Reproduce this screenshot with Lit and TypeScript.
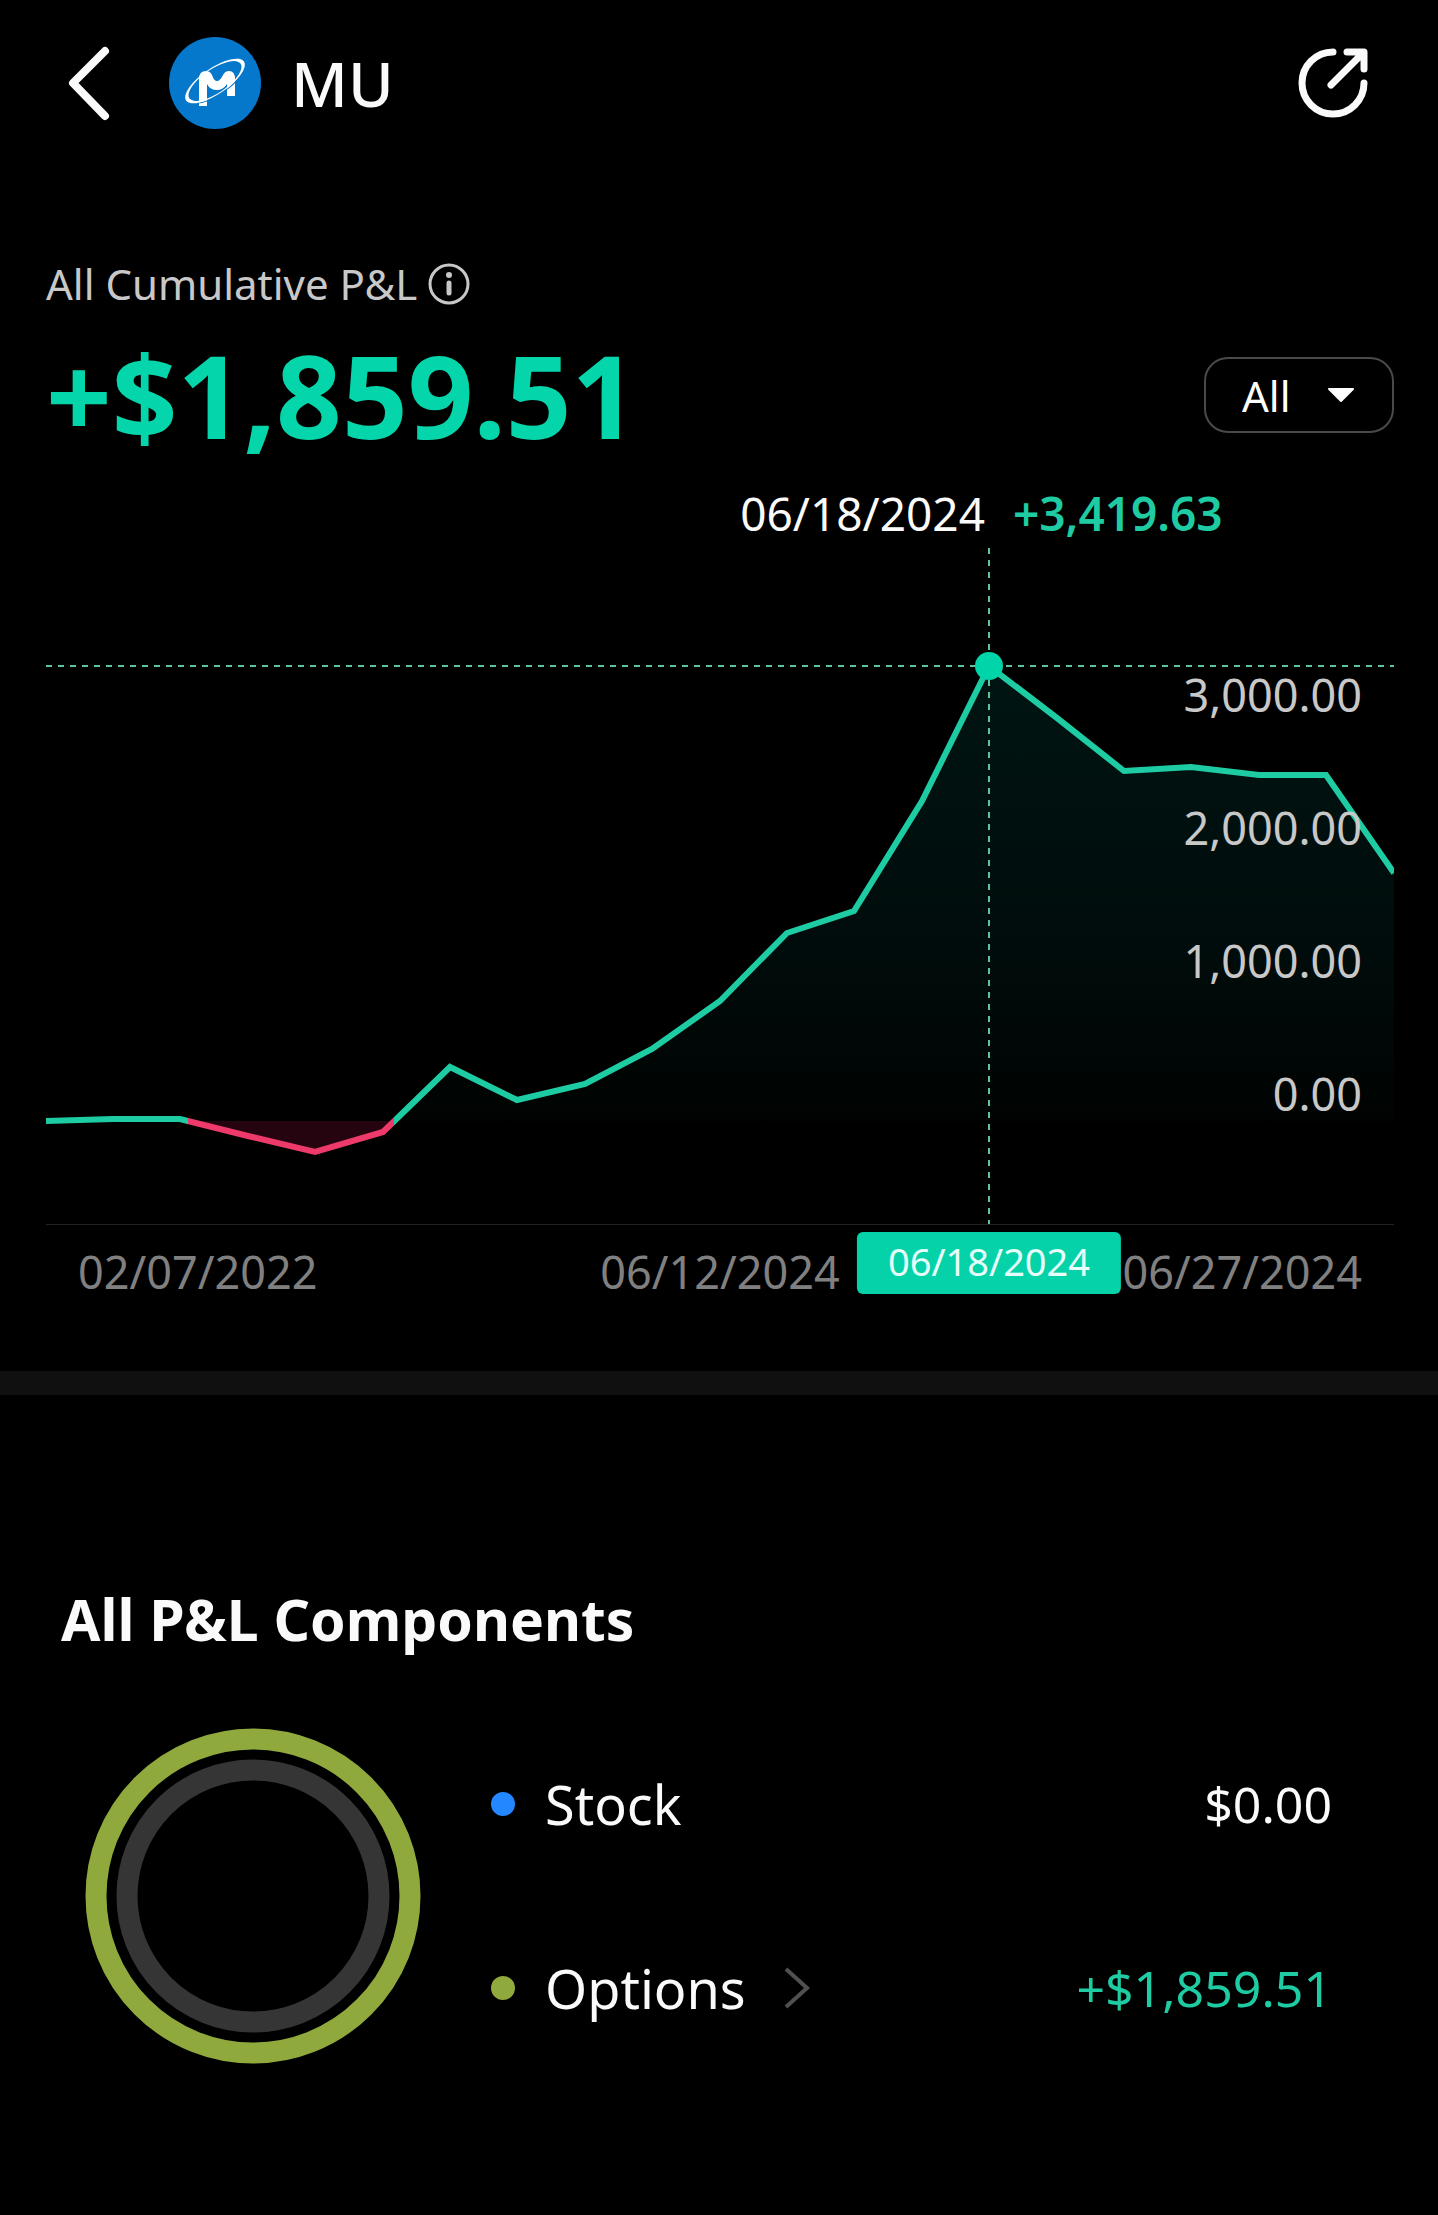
import { LitElement, html, css, svg } from "lit";
import { customElement } from "lit/decorators.js";

const PLOT_W = 1348;
const PLOT_H = 676;
const ZERO_Y = 573;
const PX_PER_DOLLAR = 0.133;
const GAIN = "#1ecca4";
const LOSS = "#ee3a6a";

const SERIES = [
  0, 15, 15, -110, -233, -80, 406, 158, 278, 541, 902, 1414, 1580, 2406, 3419.63,
  3030, 2635, 2662, 2602, 2598, 1865,
];
const SELECTED = 14;

const px = (i: number) => Math.floor((i * PLOT_W) / (SERIES.length - 1));
const py = (v: number) => Math.round(ZERO_Y - v * PX_PER_DOLLAR);

/** Colour stops along x that switch the line colour where the series crosses zero. */
const lineStops = () => {
  const stops: { at: number; color: string }[] = [];
  for (let i = 1; i < SERIES.length; i++) {
    const a = SERIES[i - 1];
    const b = SERIES[i];
    if (a * b >= 0) continue;
    const at = (px(i - 1) + (a / (a - b)) * (px(i) - px(i - 1))) / PLOT_W;
    stops.push({ at, color: a > 0 ? GAIN : LOSS }, { at, color: b > 0 ? GAIN : LOSS });
  }
  return stops;
};

@customElement("pnl-chart")
export class PnlChart extends LitElement {
  static styles = css`
    :host {
      display: block;
      position: relative;
    }
    .readout {
      display: flex;
      gap: 28px;
      padding-left: 51.5%;
      font-size: 46px;
      line-height: 64px;
      white-space: nowrap;
    }
    .readout strong {
      font-weight: 600;
      color: #1ecba2;
    }
    .plot {
      display: grid;
      position: relative;
      margin-top: 3px;
      border-bottom: 1px solid #222;
    }
    .plot > svg,
    .scale {
      grid-area: 1 / 1;
    }
    .plot > svg {
      display: block;
      width: 100%;
      height: 676px;
    }
    .scale {
      list-style: none;
      margin: 0;
      padding: 80px 32px 0 0;
      text-align: right;
      font-size: 45px;
      line-height: 133px;
      color: #c8c8c8;
      z-index: 1;
    }
    .marker {
      position: absolute;
      width: 28px;
      height: 28px;
      border-radius: 50%;
      background: #00d4a9;
      transform: translate(-50%, -50%);
    }
    .dates {
      position: relative;
      display: flex;
      justify-content: space-between;
      padding: 15px 32px 0;
      font-size: 45px;
      line-height: 64px;
      color: #808080;
    }
    .tag {
      position: absolute;
      top: 7px;
      transform: translateX(-50%);
      padding: 0 31px;
      height: 62px;
      border-radius: 6px;
      background: #05d2a8;
      color: #e6fffa;
      font-size: 38px;
      line-height: 58px;
    }
  `;

  render() {
    const pts = SERIES.map((v, i) => `${px(i)},${py(v)}`).join(" ");
    const sx = px(SELECTED);
    const sy = py(SERIES[SELECTED]);
    const left = `left:${(sx / PLOT_W) * 100}%`;
    const plot = svg`
      <defs>
        <linearGradient id="stroke" gradientUnits="userSpaceOnUse" x1="0" y1="0" x2=${PLOT_W} y2="0">
          ${lineStops().map((s) => svg`<stop offset=${s.at} stop-color=${s.color}></stop>`)}
        </linearGradient>
        <linearGradient id="area" gradientUnits="userSpaceOnUse" x1="0" y1="0" x2="0" y2=${PLOT_H}>
          <stop offset=${sy / PLOT_H} stop-color="#001513"></stop>
          <stop offset="0.6" stop-color="#000c0b"></stop>
          <stop offset=${ZERO_Y / PLOT_H} stop-color="#000302"></stop>
          <stop offset=${ZERO_Y / PLOT_H} stop-color="#26040f"></stop>
        </linearGradient>
      </defs>
      <polygon points="0,${ZERO_Y} ${pts} ${PLOT_W},${ZERO_Y}" fill="url(#area)"></polygon>
      <g stroke="#5cc4a4" stroke-width="2" stroke-dasharray="6 6">
        <line x1="0" y1=${sy} x2=${PLOT_W} y2=${sy} vector-effect="non-scaling-stroke"></line>
        <line x1=${sx} y1="0" x2=${sx} y2=${PLOT_H} vector-effect="non-scaling-stroke"></line>
      </g>
      <polyline points=${pts} fill="none" stroke="url(#stroke)" stroke-width="6"
        vector-effect="non-scaling-stroke"></polyline>`;
    return html`
      <div class="readout"><span>06/18/2024</span><strong>+3,419.63</strong></div>
      <div class="plot">
        <svg viewBox="0 0 ${PLOT_W} ${PLOT_H}" preserveAspectRatio="none" aria-hidden="true">${plot}</svg>
        <ul class="scale">
          ${["3,000.00", "2,000.00", "1,000.00", "0.00"].map((t) => html`<li>${t}</li>`)}
        </ul>
        <span class="marker" style="${left};top:${sy}px"></span>
      </div>
      <div class="dates">
        <span>02/07/2022</span><span>06/12/2024</span><span>06/27/2024</span>
        <span class="tag" style=${left}>06/18/2024</span>
      </div>
    `;
  }
}

@customElement("app-root")
export class AppRoot extends LitElement {
  static styles = css`
    :host {
      display: block;
      min-height: 100vh;
      background: #000;
      color: #fafafa;
      font-family: "Noto Sans", "Open Sans", sans-serif;
    }
    button {
      display: flex;
      padding: 0;
      border: 0;
      background: none;
      color: inherit;
      font: inherit;
      cursor: pointer;
    }
    svg {
      display: block;
    }
    .bar {
      display: flex;
      align-items: center;
      padding: 33px 70px 0 63px;
    }
    .logo {
      margin-left: 54px;
    }
    .bar h1 {
      flex: 1;
      margin: 0 0 0 30px;
      font-size: 62px;
      line-height: 100px;
      font-weight: 500;
    }
    .summary {
      padding: 119px 44px 0 46px;
    }
    .caption {
      display: flex;
      align-items: center;
      gap: 11px;
      font-size: 42px;
      line-height: 64px;
      color: #c8c8c8;
    }
    .total-row {
      display: flex;
      align-items: center;
      justify-content: space-between;
    }
    .total {
      font-size: 115px;
      line-height: 158px;
      font-weight: 700;
      color: #05d5aa;
    }
    .picker {
      position: relative;
      display: flex;
      align-items: center;
    }
    .picker select {
      appearance: none;
      width: 190px;
      height: 76px;
      padding: 0 0 0 36px;
      border: 2px solid #4a4a4a;
      border-radius: 24px;
      background: #000;
      color: #fff;
      font: inherit;
      font-size: 42px;
    }
    .picker svg {
      position: absolute;
      right: 39px;
      pointer-events: none;
    }
    pnl-chart {
      margin-top: 7px;
    }
    .divider {
      height: 24px;
      margin: 67px 0 0;
      border: 0;
      background: #101010;
    }
    .components {
      padding: 184px 106px 0 61px;
    }
    .components h2 {
      margin: 0;
      font-size: 57px;
      line-height: 80px;
      font-weight: 700;
    }
    .split {
      display: flex;
      align-items: center;
      gap: 70px;
      padding: 69px 0 0 24px;
    }
    .rows {
      flex: 1;
      display: grid;
      gap: 104px;
      margin: 0;
    }
    .row {
      display: flex;
      align-items: center;
      justify-content: space-between;
      font-size: 50px;
      line-height: 80px;
    }
    .row dt {
      display: flex;
      align-items: center;
      font-size: 54px;
    }
    .row dd {
      margin: 0;
    }
    .dot {
      width: 24px;
      height: 24px;
      margin-right: 30px;
      border-radius: 50%;
    }
    .stock {
      background: #2388ff;
    }
    .options {
      background: #8fa93c;
    }
    .gain {
      color: #1ecba2;
    }
    .more {
      align-items: center;
      gap: 36px;
    }
  `;

  render() {
    return html`
      <header class="bar">
        <button aria-label="Back">
          <svg width="52" height="80" viewBox="0 0 52 80" fill="none" stroke="#fafafa"
            stroke-width="8" stroke-linecap="round" stroke-linejoin="round">
            <path d="M42 8 10 40l32 33"></path>
          </svg>
        </button>
        <svg class="logo" width="92" height="92" viewBox="0 0 92 92" aria-hidden="true">
          <circle cx="46" cy="46" r="46" fill="#0578cb"></circle>
          <path d="M30 69V42q0-8 7-8 4 0 6 4 2 6 5 6t6-6q2-4 6-4 6 0 6 8v17h-8V47q-4 6-10 6-7 0-10-6v22z"
            fill="#fff"></path>
          <g transform="rotate(-34 46 44)">
            <path d="M18 52A31 10 0 0 0 74 52" fill="none" stroke="#0578cb" stroke-width="1"></path>
            <path d="M11 44a35 13 0 1 0 70 0a35 13 0 1 0-70 0zM15 44a31 12 0 1 1 62 0a31 12 0 1 1-62 0z"
              fill="#fff" fill-rule="evenodd"></path>
          </g>
        </svg>
        <h1>MU</h1>
        <button aria-label="Share">
          <svg width="72" height="72" viewBox="-37 -36 72 72" fill="none" stroke="#fafafa"
            stroke-width="7" stroke-linecap="round" stroke-linejoin="round">
            <path d="M0-31A31 31 0 1 0 31 0M14-31h17v17M-2 2 30-30"></path>
          </svg>
        </button>
      </header>
      <main>
        <section class="summary">
          <div class="caption">
            <span>All Cumulative P&amp;L</span>
            <button aria-label="About cumulative P&amp;L">
              <svg width="42" height="42" viewBox="0 0 42 42" fill="none" stroke="#c8c8c8">
                <circle cx="21" cy="21" r="19" stroke-width="3"></circle>
                <path d="M21 20v10" stroke-width="5" stroke-linecap="round"></path>
                <circle cx="21" cy="12" r="3" fill="#c8c8c8" stroke="none"></circle>
              </svg>
            </button>
          </div>
          <div class="total-row">
            <div class="total">+$1,859.51</div>
            <div class="picker">
              <select aria-label="Period">
                <option>All</option>
              </select>
              <svg width="28" height="16" viewBox="0 0 28 16">
                <path d="M2 2h24L14 14z" fill="#fff" stroke="#fff" stroke-width="2"
                  stroke-linejoin="round"></path>
              </svg>
            </div>
          </div>
          <pnl-chart></pnl-chart>
        </section>
        <hr class="divider" />
        <section class="components">
          <h2>All P&amp;L Components</h2>
          <div class="split">
            <svg width="336" height="336" viewBox="0 0 336 336" fill="none" stroke-width="21"
              aria-hidden="true">
              <circle cx="168" cy="168" r="157" stroke="#8fa93c"></circle>
              <circle cx="168" cy="168" r="126" stroke="#353535"></circle>
            </svg>
            <dl class="rows">
              <div class="row">
                <dt><span class="dot stock"></span>Stock</dt>
                <dd>$0.00</dd>
              </div>
              <div class="row">
                <dt>
                  <span class="dot options"></span>
                  <button class="more">
                    Options
                    <svg width="30" height="42" viewBox="0 0 30 42" fill="none" stroke="#505050"
                      stroke-width="4">
                      <path d="M4 2 25 21 4 40"></path>
                    </svg>
                  </button>
                </dt>
                <dd class="gain">+$1,859.51</dd>
              </div>
            </dl>
          </div>
        </section>
      </main>
    `;
  }
}
